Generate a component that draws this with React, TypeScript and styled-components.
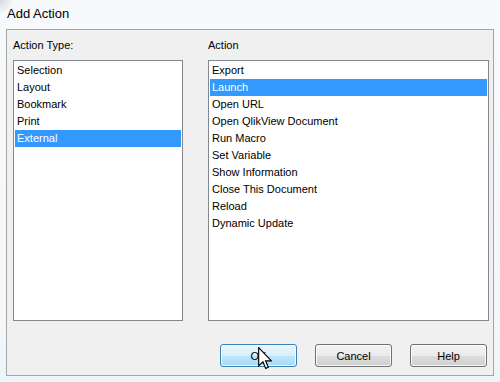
import styled, { createGlobalStyle } from 'styled-components'

const GlobalStyle = createGlobalStyle`
  html, body {
    margin: 0;
    padding: 0;
    background: #ffffff;
  }
  * {
    box-sizing: border-box;
  }
`

const Window = styled.div`
  position: relative;
  width: 500px;
  height: 382px;
  display: flex;
  flex-direction: column;
  overflow: hidden;
  font-family: 'Segoe UI', 'Liberation Sans', Arial, sans-serif;
  color: #000;
  background:
    radial-gradient(circle at 0 0, rgba(150, 160, 170, 0.35) 0, rgba(255, 255, 255, 0) 14px),
    linear-gradient(180deg, #f7f9fb 0%, #f4f7fa 85%, #eaf6f8 100%);
`

const TitleBar = styled.div`
  height: 29px;
  flex: none;
  display: flex;
  align-items: center;
  padding: 0 0 3px 7px;
  font-size: 13px;
`

const Client = styled.div`
  flex: none;
  height: 347px;
  margin: 0 6px 0 6px;
  border: 1px solid #a5a5a5;
  background: #f0f0f0;
  display: flex;
  flex-direction: column;
  padding: 8px 4px 0 6px;
`

const Columns = styled.div`
  display: grid;
  grid-template-columns: 170px 281px;
  column-gap: 25px;
`

const Column = styled.div`
  display: flex;
  flex-direction: column;
  gap: 7px;
`

const Label = styled.div`
  font-size: 11px;
  line-height: 15px;
  height: 15px;
  padding-left: 0;
`

const ListBox = styled.div`
  height: 261px;
  background: #ffffff;
  border: 1px solid #828790;
  padding: 1px;
  display: flex;
  flex-direction: column;
`

const Item = styled.div<{ $selected?: boolean }>`
  height: 17px;
  line-height: 17px;
  font-size: 11px;
  padding-left: 2px;
  white-space: nowrap;
  background: ${({ $selected }) => ($selected ? '#3399ff' : 'transparent')};
  color: ${({ $selected }) => ($selected ? '#ffffff' : '#000000')};
`

const ButtonRow = styled.div`
  display: flex;
  justify-content: flex-end;
  gap: 18px;
  margin-top: 23px;
  padding-right: 2px;
`

const Button = styled.div<{ $hover?: boolean }>`
  position: relative;
  width: 77px;
  height: 23px;
  display: flex;
  align-items: center;
  justify-content: center;
  font-size: 11px;
  border-radius: 3px;
  border: 1px solid ${({ $hover }) => ($hover ? '#3c7fb1' : '#707070')};
  box-shadow: inset 0 0 0 1px rgba(255, 255, 255, 0.85);
  background: ${({ $hover }) =>
    $hover
      ? 'linear-gradient(180deg, #eaf6fd 0%, #d9f0fc 50%, #bee6fd 51%, #a7d9f5 100%)'
      : 'linear-gradient(180deg, #f2f2f2 0%, #ebebeb 50%, #dddddd 51%, #cfcfcf 100%)'};
`

const Cursor = styled.svg`
  position: absolute;
  left: 258px;
  top: 347px;
  width: 14px;
  height: 23px;
`

const typeItems = ['Selection', 'Layout', 'Bookmark', 'Print', 'External']
const actionItems = [
  'Export',
  'Launch',
  'Open URL',
  'Open QlikView Document',
  'Run Macro',
  'Set Variable',
  'Show Information',
  'Close This Document',
  'Reload',
  'Dynamic Update',
]

export default function App() {
  return (
    <>
      <GlobalStyle />
      <Window>
        <TitleBar>Add Action</TitleBar>
        <Client>
          <Columns>
            <Column>
              <Label>Action Type:</Label>
              <ListBox>
                {typeItems.map((t) => (
                  <Item key={t} $selected={t === 'External'}>
                    {t}
                  </Item>
                ))}
              </ListBox>
            </Column>
            <Column>
              <Label>Action</Label>
              <ListBox>
                {actionItems.map((t) => (
                  <Item key={t} $selected={t === 'Launch'}>
                    {t}
                  </Item>
                ))}
              </ListBox>
            </Column>
          </Columns>
          <ButtonRow>
            <Button $hover>OK</Button>
            <Button>Cancel</Button>
            <Button>Help</Button>
          </ButtonRow>
        </Client>
        <Cursor viewBox="0 0 12 20">
          <path
            d="M0.5 0.5 L0.5 16.5 L4.2 12.9 L6.6 18.6 L8.9 17.6 L6.5 12 L11.5 12 Z"
            fill="#ffffff"
            stroke="#000000"
            strokeWidth="1"
            strokeLinejoin="miter"
          />
        </Cursor>
      </Window>
    </>
  )
}
